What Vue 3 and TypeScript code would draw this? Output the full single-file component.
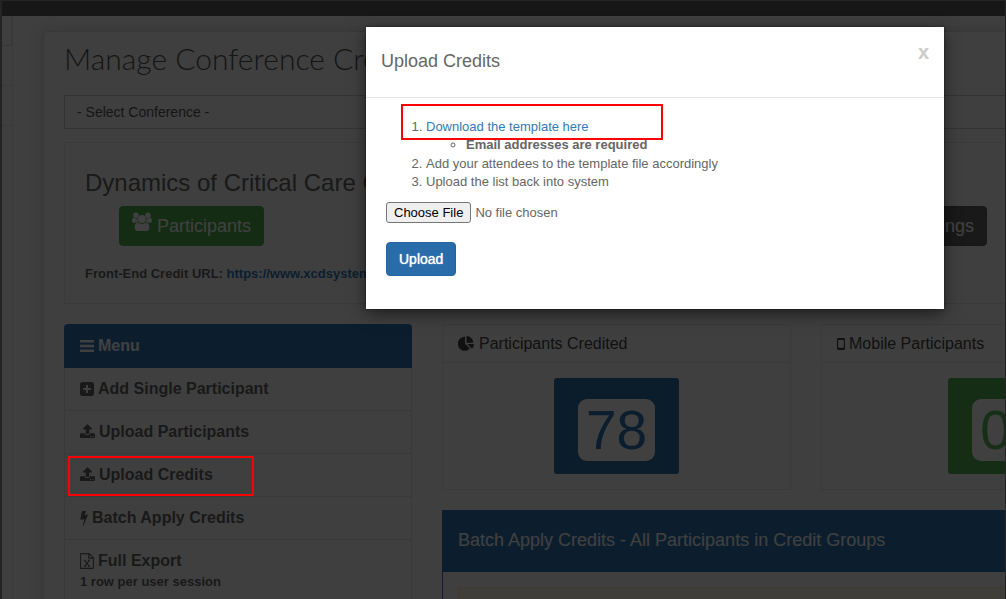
<script setup lang="ts">
import { ref } from 'vue'

interface MenuItem {
  label: string
  icon: 'plus' | 'upload' | 'bolt' | 'excel'
  note?: string
  marked?: boolean
}

const menu: MenuItem[] = [
  { label: 'Add Single Participant', icon: 'plus' },
  { label: 'Upload Participants', icon: 'upload' },
  { label: 'Upload Credits', icon: 'upload', marked: true },
  { label: 'Batch Apply Credits', icon: 'bolt' },
  { label: 'Full Export', icon: 'excel', note: '1 row per user session' },
]

const conference = ref('')
const open = ref(true)
</script>

<template>
  <div class="shell">
    <header class="topbar"></header>
    <div class="body">
      <nav class="rail" aria-label="Sections">
        <span class="rail-head"></span>
        <span class="rail-item"></span>
        <span class="rail-item"></span>
      </nav>
      <main class="sheet">
        <h1>Manage Conference Credits</h1>
        <select v-model="conference" class="picker" aria-label="Select Conference">
          <option value="">- Select Conference -</option>
        </select>

        <section class="well">
          <h2>Dynamics of Critical Care Conference</h2>
          <div class="actions">
            <button type="button" class="btn green">
              <svg class="users" width="20" height="19" viewBox="0 0 20 19" fill="currentColor">
                <circle cx="4" cy="3.2" r="2.7" />
                <circle cx="16" cy="3.2" r="2.7" />
                <path d="M1.9 5.6C.6 5.7 0 7 0 8.8c0 1.400.8 2 2 2h2.300c.4-.5.9-.8 1.600-1A5 5 0 0 1 5.400 6.300C4.300 6.700 3 6.500 1.900 5.600zM18.100 5.600c1.300.1 1.900 1.400 1.900 3.200 0 1.400-.8 2-2 2h-2.300c-.4-.5-.9-.8-1.600-1a5 5 0 0 0 .5-3.500c1.100.4 2.400.2 3.500-.7z" />
                <circle cx="10" cy="7" r="4" />
                <path d="M6 10.600c-2.200 0-3.300 2.200-3.300 5.100C2.700 17.700 4 19 6 19h8c2 0 3.300-1.300 3.300-3.300 0-2.900-1.100-5.100-3.300-5.100-1 .8-2.400 1.400-4 1.400s-3-.6-4-1.400z" />
              </svg>
              Participants
            </button>
            <button type="button" class="btn dark">Settings</button>
          </div>
          <p class="url">Front-End Credit URL: <a href="#">https://www.xcdsystem.com/</a></p>
        </section>

        <div class="columns">
          <aside class="menu">
            <h3>
              <svg width="14" height="12" viewBox="0 0 14 12" fill="currentColor">
                <rect width="14" height="2.400" rx=".5" />
                <rect y="4.800" width="14" height="2.400" rx=".5" />
                <rect y="9.600" width="14" height="2.400" rx=".5" />
              </svg>
              Menu
            </h3>
            <a v-for="item in menu" :key="item.label" href="#" class="entry" :class="{ marked: item.marked }">
              <span class="line">
                <svg v-if="item.icon === 'plus'" width="14" height="14" viewBox="0 0 14 14" fill="currentColor" fill-rule="evenodd">
                  <path d="M2.500 0h9A2.500 2.500 0 0 1 14 2.500v9a2.500 2.500 0 0 1-2.500 2.500h-9A2.500 2.500 0 0 1 0 11.500v-9A2.500 2.500 0 0 1 2.500 0zM6 3v3H3v2h3v3h2V8h3V6H8V3z" />
                </svg>
                <svg v-else-if="item.icon === 'upload'" class="raised" width="15" height="14" viewBox="0 0 15 14" fill="currentColor" fill-rule="evenodd">
                  <path d="M7.500 0 12 4.600c.3.400.1.900-.4.900H9.300v4c0 .3-.2.500-.5.500H6.200c-.3 0-.5-.2-.5-.5v-4H3.400c-.5 0-.7-.5-.4-.9z" />
                  <path d="M.8 9.300h3.900c.2 1 .8 1.700 1.700 1.700h2.200c.9 0 1.500-.7 1.700-1.700h3.900c.5 0 .8.300.8.800v3.100c0 .5-.3.800-.8.800H.8c-.5 0-.8-.3-.8-.8v-3.100c0-.5.300-.8.800-.8zM10 12v1h1v-1zm2.300 0v1h1v-1z" />
                </svg>
                <svg v-else-if="item.icon === 'bolt'" width="8" height="15" viewBox="0 0 8 15" fill="currentColor">
                  <path d="M2.300 0h3.300c.3 0 .5.300.3.600L4.500 4.300l3-.7c.3-.1.600.2.400.5L3.600 14.600c-.2.500-.9.400-.8-.2l1.500-6.500-3.400.8c-.3.100-.5-.2-.5-.5L1.800.4C1.900.2 2 0 2.300 0z" />
                </svg>
                <svg v-else width="14" height="16" viewBox="0 0 14 16" fill="none" stroke="currentColor">
                  <path d="M1 .6h8L13.400 5v10c0 .2-.2.400-.4.400H1c-.2 0-.4-.2-.4-.4V1c0-.2.200-.4.400-.4zM8.800.6v4.500h4.600" stroke-width="1.100" />
                  <path d="m4.800 7.500 4.400 5.700M9.200 7.500l-4.400 5.700" stroke-width="1.200" />
                  <path d="M3.800 7.300h2.400M7.900 7.300h2.300M3.800 13.300h2.300M7.800 13.300h2.400" stroke-width=".9" />
                </svg>
                {{ item.label }}
              </span>
              <small v-if="item.note">{{ item.note }}</small>
            </a>
          </aside>

          <div class="content">
            <div class="stats">
              <section class="stat">
                <h3>
                  <svg width="17" height="15" viewBox="0 0 17 15" fill="currentColor">
                    <path d="M7 .8v6.900l4.900 4.900A7 7 0 1 1 7 .8z" />
                    <path d="M8.500 0A7 7 0 0 1 15.400 6.800H8.500z" />
                    <path d="M9.300 8.100H16a7 7 0 0 1-2 4.700z" />
                  </svg>
                  Participants Credited
                </h3>
                <div class="stat-body"><div class="tile blue"><span>78</span></div></div>
              </section>
              <section class="stat">
                <h3>
                  <svg width="8" height="12" viewBox="0 0 8 12" fill="currentColor" fill-rule="evenodd">
                    <path d="M1.200 0h5.600C7.500 0 8 .5 8 1.200v9.600c0 .7-.5 1.200-1.200 1.200H1.200C.5 12 0 11.500 0 10.800V1.200C0 .5.500 0 1.200 0zM1.200 2v7.800h5.600V2z" />
                  </svg>
                  Mobile Participants
                </h3>
                <div class="stat-body"><div class="tile mint"><span>0</span></div></div>
              </section>
            </div>
            <section class="batch">
              <h3>Batch Apply Credits - All Participants in Credit Groups</h3>
              <div class="batch-body"><div class="notice"></div></div>
            </section>
          </div>
        </div>
      </main>
    </div>

    <div class="backdrop"></div>
    <div class="edge"></div>
    <div v-if="open" class="stage">
      <div class="modal" role="dialog" aria-labelledby="dialog-title">
        <div class="modal-head">
          <h4 id="dialog-title">Upload Credits</h4>
          <button type="button" class="close" aria-label="Close" @click="open = false">x</button>
        </div>
        <form class="modal-body" @submit.prevent>
          <ol>
            <li class="template">
              <a href="#">Download the template here</a>
              <ul><li>Email addresses are required</li></ul>
            </li>
            <li>Add your attendees to the template file accordingly</li>
            <li>Upload the list back into system</li>
          </ol>
          <input type="file" aria-label="Attendee list" />
          <button type="submit" class="upload">Upload</button>
        </form>
      </div>
    </div>
  </div>
</template>

<style>
body {
  margin: 0;
}
</style>

<style scoped>
*,
*::after {
  box-sizing: border-box;
}
.shell {
  position: relative;
  height: 100vh;
  overflow: hidden;
  background: #f9f9f9;
  color: #666;
  font: 13px/18px "Liberation Sans", Arial, sans-serif;
}
h1, h2, h3, h4, p, ol, ul {
  margin: 0;
}
svg {
  flex: none;
}
.topbar {
  height: 16px;
  background: #5c5c5c;
}
.body {
  display: flex;
}
.rail {
  flex: none;
  display: flex;
  flex-direction: column;
  width: 13px;
  height: 100vh;
  padding-left: 2px;
  background: #fcfcfc;
  border-right: 1px solid #e8e8e8;
}
.rail-head {
  height: 30px;
  border: solid #dcdcdc;
  border-width: 0 1px 1px 0;
}
.rail-item {
  height: 40px;
  border-bottom: 1px solid #e8e8e8;
}
.sheet {
  flex: 1 0 auto;
  min-width: 1148px;
  min-height: 700px;
  margin: 15px 0 0 30px;
  padding: 9px 20px;
  background: #fcfcfc;
  border: 1px solid #e0e0e0;
  border-radius: 4px;
  box-shadow: 0 0 16px rgba(0, 0, 0, 0.14);
}
h1 {
  font: 300 30px/34px Lato, sans-serif;
  color: #555;
}
.picker {
  display: block;
  width: 100%;
  height: 34px;
  margin: 20px 0 13px;
  padding: 0 12px;
  appearance: none;
  background: #fcfcfc;
  border: 1px solid #ccc;
  border-radius: 0;
  color: #555;
  font: 14px/20px "Liberation Sans", Arial, sans-serif;
}
.well {
  height: 162px;
  padding: 26px 20px 0;
  border: 1px solid #e8e8e8;
}
h2 {
  font-weight: 400;
  font-size: 24px;
  line-height: 28px;
}
.actions {
  display: flex;
  justify-content: space-between;
  margin: 9px 162px 19px 34px;
}
.btn {
  display: flex;
  height: 40px;
  padding: 0 12px;
  gap: 5px;
  border: 1px solid #4cae4c;
  border-radius: 4px;
  color: #fff;
  font: 18px/38px "Liberation Sans", Arial, sans-serif;
}
.green {
  background: #50b050;
}
.dark {
  background: #666;
  border-color: #5a5a5a;
}
.users {
  margin-top: 5px;
}
.url {
  font-weight: 700;
}
a {
  color: #337ab7;
  text-decoration: none;
}
.columns {
  display: grid;
  grid-template-columns: 348px 1fr;
  gap: 30px;
  margin-top: 20px;
}
.menu {
  border: 1px solid #e4e4e4;
  border-top: 0;
  border-radius: 4px 4px 0 0;
}
.menu h3 {
  display: flex;
  align-items: center;
  gap: 4px;
  height: 44px;
  margin: 0 -1px;
  padding: 0 16px;
  background: #337ab7;
  border-radius: 4px 4px 0 0;
  color: #fff;
  font-size: 16px;
  line-height: 20px;
}
.entry {
  position: relative;
  display: block;
  padding: 11px 15px;
  border-bottom: 1px solid #e4e4e4;
  color: #666;
  font-weight: 700;
}
.line {
  display: flex;
  align-items: center;
  gap: 4px;
  font-size: 16px;
  line-height: 20px;
}
.raised {
  margin-bottom: 2px;
}
small {
  display: block;
  margin-top: 2px;
  font-size: 13px;
  line-height: 18px;
}
.marked::after {
  content: "";
  position: absolute;
  z-index: 3;
  left: 3px;
  top: 2px;
  width: 186px;
  height: 40px;
  border: 2px solid #f00;
}
.stats {
  display: grid;
  grid-template-columns: 1fr 1fr;
  gap: 30px;
}
.stat {
  border: 1px solid #e6e6e6;
}
.stat h3 {
  display: flex;
  align-items: center;
  gap: 4px;
  height: 38px;
  padding: 0 15px;
  border-bottom: 1px solid #e6e6e6;
  color: #444;
  font-weight: 400;
  font-size: 16px;
  line-height: 20px;
}
.stat-body {
  display: flex;
  justify-content: center;
  padding: 15px 0;
}
.tile {
  padding: 21px 24px 13px;
  border-radius: 3px;
}
.tile span {
  display: block;
  padding: 0 8px;
  background: #fff;
  border-radius: 9px;
  font-size: 55px;
  line-height: 62px;
}
.blue {
  background: #2d75ad;
  color: #337ab7;
}
.mint {
  background: #54ae54;
  color: #5cb85c;
}
.batch {
  margin-top: 20px;
  border: 1px solid #337ab7;
}
.batch h3 {
  padding: 19px 15px 22px;
  background: #337ab7;
  color: #fff;
  font-weight: 400;
  font-size: 18px;
  line-height: 20px;
}
.batch-body {
  padding: 15px;
}
.notice {
  height: 60px;
  background: #fcf8e3;
  border: 1px solid #faebcc;
}
.backdrop {
  position: absolute;
  z-index: 1;
  inset: 0;
  background: rgba(0, 0, 0, 0.75);
}
.edge {
  position: absolute;
  z-index: 2;
  inset: 0;
  border: solid #242424;
  border-width: 1px 1px 0 2px;
}
.stage {
  position: absolute;
  z-index: 4;
  inset: 0;
  display: flex;
  justify-content: flex-end;
  align-items: flex-start;
  padding: 27px 62px 0;
}
.modal {
  width: 100%;
  max-width: 578px;
  background: #fff;
  box-shadow: 0 5px 15px rgba(0, 0, 0, 0.5), 0 0 2px rgba(0, 0, 0, 0.5);
}
.modal-head {
  display: flex;
  align-items: flex-start;
  justify-content: space-between;
  height: 71px;
  padding: 15px;
  border-bottom: 1px solid #e5e5e5;
}
h4 {
  padding-top: 7px;
  font-weight: 400;
  font-size: 18px;
  line-height: 24px;
}
.close {
  padding: 0;
  border: 0;
  background: none;
  color: #ccc;
  font: 700 20px/20px "Liberation Sans", Arial, sans-serif;
}
.modal-body {
  display: flex;
  flex-direction: column;
  align-items: flex-start;
  padding: 20px 20px 33px;
}
ol {
  padding-left: 40px;
}
ul {
  padding-left: 40px;
  font-weight: 700;
  list-style: circle;
}
.template {
  position: relative;
  padding-bottom: 1px;
}
.template::after {
  content: "";
  position: absolute;
  left: -25px;
  top: -14px;
  width: 262px;
  height: 36px;
  border: 2px solid #f00;
}
input {
  margin: 11px 0 19px;
  color: #666;
  font: 13px/18px "Liberation Sans", Arial, sans-serif;
}
input::file-selector-button {
  height: 21px;
  margin: 0 4px 0 0;
  padding: 0 7px;
  background: #efefef;
  border: 1px solid #767676;
  border-radius: 3px;
  color: #000;
  font: 13px/18px "Liberation Sans", Arial, sans-serif;
}
.upload {
  height: 34px;
  padding: 0 12px;
  background: #286da9;
  border: 1px solid #2462a0;
  border-radius: 4px;
  color: #fff;
  font: 14px/20px "Liberation Sans", Arial, sans-serif;
  text-shadow: 0 0 1px #fff;
}
</style>
